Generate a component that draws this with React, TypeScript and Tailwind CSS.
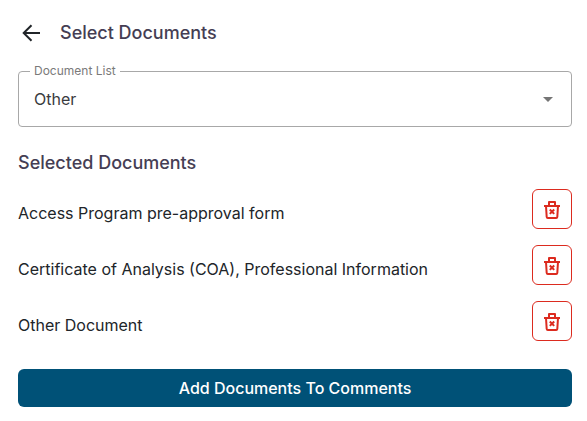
import { useId, useState } from "react";

const documents = [
  "Access Program pre-approval form",
  "Certificate of Analysis (COA), Professional Information",
  "Other Document",
];

const ArrowBackIcon = () => (
  <svg
    viewBox="0 0 24 24"
    className="size-6 fill-none stroke-current stroke-2"
    aria-hidden="true"
  >
    <path d="M22 12H6M13.5 4.2L5.7 12l7.8 7.8" />
  </svg>
);

const DeleteIcon = () => (
  <svg
    viewBox="0 0 24 24"
    className="size-6 fill-none stroke-current stroke-2"
    strokeLinejoin="round"
    aria-hidden="true"
  >
    <path d="M4 9h16M9 8.5V5h6v3.5" />
    <path d="M6 9l.7 11q.1 1 1.1 1h8.4q1 0 1.1-1L18 9" />
    <path d="M9.8 12.5l4.4 4.4M14.2 12.5l-4.4 4.4" />
  </svg>
);

const App: React.FC = () => {
  const [selected, setSelected] = useState(documents);
  const listId = useId();

  return (
    <main className="bg-white px-[15px] pt-[19px] pb-4 pl-[18px] font-['Inter',sans-serif] text-base text-[#212529]">
      <header className="flex items-center gap-[18px]">
        <button type="button" aria-label="Back">
          <ArrowBackIcon />
        </button>
        <h1 className="text-lg leading-7 font-medium text-[#453e54]">Select Documents</h1>
      </header>

      <fieldset className="relative mt-4 h-16 rounded border border-[#a8a8a8] px-[11px]">
        <legend className="px-1 text-xs leading-4 text-[#7a7a7a]">
          <label htmlFor={listId}>Document List</label>
        </legend>
        <select
          id={listId}
          className="h-10 w-full appearance-none bg-transparent px-1 text-[#3a3b40] outline-none"
        >
          <option>Other</option>
        </select>
        <svg
          viewBox="0 0 24 24"
          className="pointer-events-none absolute top-2 right-[11px] size-6 fill-[#757575]"
          aria-hidden="true"
        >
          <path d="M7 10l5 5 5-5z" />
        </svg>
      </fieldset>

      <h2 className="mt-[22px] text-lg leading-7 font-medium text-[#453e54]">Selected Documents</h2>
      <ul className="mt-3 flex flex-col gap-4">
        {selected.map((name) => (
          <li key={name} className="flex items-center justify-between">
            <span className="pt-2">{name}</span>
            <button
              type="button"
              aria-label={`Remove ${name}`}
              onClick={() => setSelected(selected.filter((item) => item !== name))}
              className="flex size-10 items-center justify-center rounded-md border border-[#dc2b1f] text-[#dc2b1f]"
            >
              <DeleteIcon />
            </button>
          </li>
        ))}
      </ul>

      <button
        type="button"
        className="mt-7 h-[38px] w-full rounded-md bg-[#005177] font-medium text-white"
      >
        Add Documents To Comments
      </button>
    </main>
  );
};

export default App;
